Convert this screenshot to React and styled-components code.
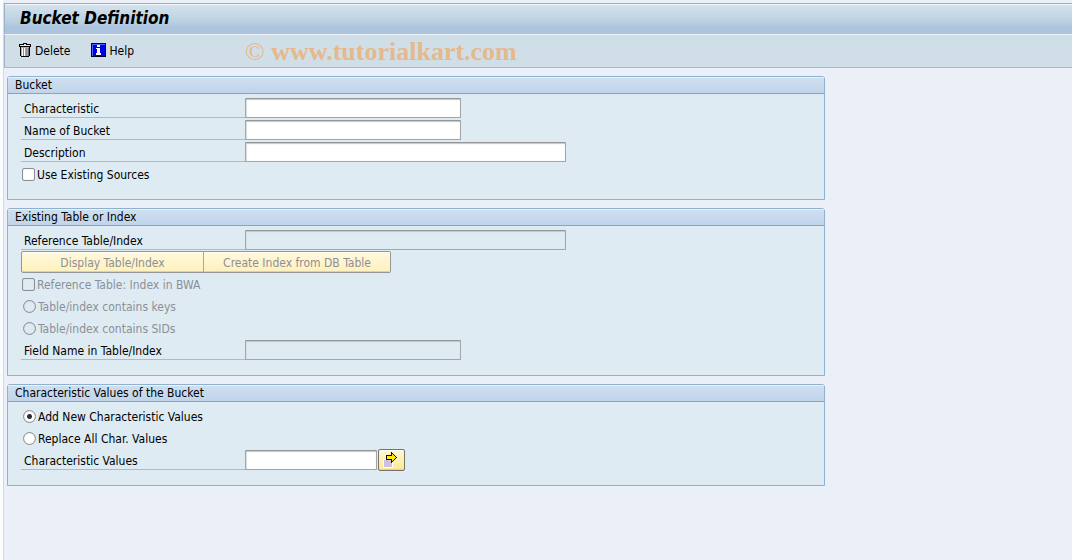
import React from "react";
import styled, { createGlobalStyle, css } from "styled-components";

const GlobalStyle = createGlobalStyle`
  * { box-sizing: border-box; }
  body {
    margin: 0;
    background: #ebeff8;
    color: #000;
    font: 12px/16px "DejaVu Sans Condensed", "Noto Sans", sans-serif;
  }
  button, input { font: inherit; color: inherit; margin: 0; }
`;

const Page = styled.div`
  min-height: 100vh;
  padding-top: 3px;
  border-left: 3px solid #fbfcfe;
  background: #ebeff8;
`;

const Frame = styled.div`
  min-height: calc(100vh - 3px);
  border-left: 1px solid #d3d9e6;
`;

const TitleBar = styled.header`
  height: 32px;
  padding: 0 15px 2px;
  display: flex;
  align-items: center;
  border-top: 1px solid #9fa9bd;
  border-left: 1px solid #9fb3c8;
  border-bottom: 1px solid #eef3f9;
  background: linear-gradient(#d5e3ef, #bad0e0 60%, #adc5de 75%, #adc4de);
  box-shadow: inset 0 1px #f2f7fb;
`;

const Title = styled.h1`
  margin: 0;
  font: italic bold 17px/20px "DejaVu Sans Condensed", "Noto Sans", sans-serif;
`;

const Toolbar = styled.div`
  position: relative;
  height: 33px;
  padding: 0 14px;
  display: flex;
  align-items: center;
  gap: 21px;
  background: #d0dee8;
  border-left: 1px solid #9fb3c8;
  border-bottom: 1px solid #a6b9c9;
`;

const ToolButton = styled.button`
  display: flex;
  align-items: center;
  gap: 3px;
  padding: 0;
  border: 0;
  background: none;
  svg { display: block; margin-bottom: 2px; }
`;

const Watermark = styled.div`
  position: absolute;
  left: 240px;
  top: 3px;
  color: #e5b98b;
  font: bold 26px/28px "Liberation Serif", serif;
  white-space: nowrap;
  pointer-events: none;
  span { font-weight: normal; }
`;

const Content = styled.main`
  padding: 8px 3px;
  display: flex;
  flex-direction: column;
  gap: 8px;
`;

const Panel = styled.section`
  width: 100%;
  max-width: 818px;
  padding-bottom: 14px;
  border: 1px solid #8fb1d0;
  border-radius: 3px 3px 0 0;
  background: #deebf3;
`;

const PanelTitle = styled.h2`
  margin: 0 0 3px;
  height: 17px;
  padding: 0 7px;
  border-bottom: 1px solid #86a3c6;
  border-radius: 2px 2px 0 0;
  background: linear-gradient(#cfdfee, #c0d5eb);
  box-shadow: inset 0 1px #e9f2fa;
  font-size: 12px;
  line-height: 16px;
  font-weight: normal;
`;

const Row = styled.div`
  height: 22px;
  padding-left: 13px;
  display: flex;
  align-items: center;
`;

const FieldLabel = styled.label`
  width: 224px;
  height: 20px;
  padding-left: 3px;
  line-height: 22px;
  border-bottom: 1px solid #b3b9be;
`;

const TextInput = styled.input`
  width: ${(p) => p.$width}px;
  height: 20px;
  padding: 0 3px;
  border: 1px solid #a3a5a8;
  border-top-color: #939598;
  border-radius: 1px;
  background: #fff;
  box-shadow: inset 0 1px 1px #c4c7ca, inset 1px 0 1px #dcdfe1;
  outline: none;
  &:disabled { background: #deebf3; }
`;

const ChoiceLabel = styled.label`
  display: flex;
  align-items: center;
  gap: 2px;
  line-height: 18px;
  padding-left: ${(p) => (p.$radio ? 2 : 1)}px;
  color: ${(p) => (p.$disabled ? "#8b9096" : "#000")};
  span { padding-top: 2px; }
`;

const choice = css`
  appearance: none;
  width: 13px;
  height: 13px;
  border: 1px solid #8c8f93;
  background: #fff;
  box-shadow: inset 0 0 1px #a9adb1;
  &:disabled { background: #deebf3; }
`;

const CheckBox = styled.input.attrs({ type: "checkbox" })`
  ${choice}
  border-radius: 2px;
`;

const Radio = styled.input.attrs({ type: "radio" })`
  ${choice}
  border-radius: 50%;
  &:checked { background: radial-gradient(circle, #2b2d3a 2px, #fff 3px); }
`;

const ActionButton = styled.button`
  width: ${(p) => p.$width}px;
  height: 22px;
  padding: 1px 0 0;
  border: 1px solid #95969a;
  border-radius: ${(p) => p.$corners || "2px"};
  background: linear-gradient(#fff8dd, #fff1bd);
  box-shadow: inset 0 1px #fffdf0, inset 0 -1px #e5d28e;
  &:disabled { color: #8b9096; }
  & + & { border-left-color: #b3a878; margin-left: -1px; }
`;

const IconButton = styled(ActionButton)`
  margin-left: 1px;
  padding: 0 2px 0 0;
  display: flex;
  align-items: center;
  justify-content: center;
  border-color: #77736b;
  background: linear-gradient(#fff7d4, #ffe993);
`;

const TrashIcon = () => (
  <svg width="13" height="15" viewBox="0 0 13 15" shapeRendering="crispEdges" aria-hidden="true">
    <path d="M4 0h4v1h4v3H0V1h4z" fill="#000" />
    <path d="M5 1h2v1H5zM1 2h10v1H1z" fill="#e4e6ec" />
    <path d="M1 4h10v9h-1v1H2v-1H1z" fill="#000" />
    <path d="M2 4h8v9H2z" fill="#aaa9b6" />
    <path d="M3 5h1v8H3zM5 5h1v8H5z" fill="#fff" />
    <path d="M4 5h1v8H4zM7 5h1v8H7z" fill="#8c8b9d" />
    <path d="M9 5h1v8H9z" fill="#66667a" />
  </svg>
);

const InfoIcon = () => (
  <svg width="15" height="14" viewBox="0 0 15 14" shapeRendering="crispEdges" aria-hidden="true">
    <path d="M0 0h15v14H0z" fill="#00002a" />
    <path d="M1 1h13v12H1z" fill="#0000e6" />
    <path d="M1 1h13v1H2v11H1z" fill="#4b63ff" />
    <path d="M6 2h3v2H6zM5 5h4v5h1v2H5v-2h1V6H5z" fill="#fff" />
  </svg>
);

const MultiSelectIcon = () => (
  <svg width="15" height="16" viewBox="0 0 15 16" shapeRendering="crispEdges" aria-hidden="true">
    <path d="M0 7h10v9H0z" fill="#fff" />
    <path d="M1 8h8v7H1z" fill="#d2bfe0" />
    <path d="M3 3h5V0h1v1h1v1h1v1h1v1h1v1h1v1h-1v1h-1v1h-1v1h-1v1H9v1H8V8H3z" fill="#111" />
    <path d="M4 4h5V2h1v1h1v1h1v1h1v1h-1v1h-1v1h-1v1H9V7H4z" fill="#ffe800" />
  </svg>
);

function Field({ id, label, width, disabled, children }) {
  return (
    <Row>
      <FieldLabel htmlFor={id}>{label}</FieldLabel>
      <TextInput id={id} type="text" $width={width} disabled={disabled} />
      {children}
    </Row>
  );
}

function Choice({ radio, label, disabled, ...rest }) {
  const Control = radio ? Radio : CheckBox;
  return (
    <Row>
      <ChoiceLabel $radio={radio} $disabled={disabled}>
        <Control disabled={disabled} {...rest} />
        <span>{label}</span>
      </ChoiceLabel>
    </Row>
  );
}

export default function App() {
  return (
    <Page>
      <GlobalStyle />
      <Frame>
        <TitleBar>
          <Title>Bucket Definition</Title>
        </TitleBar>
        <Toolbar>
          <ToolButton type="button"><TrashIcon />Delete</ToolButton>
          <ToolButton type="button"><InfoIcon />Help</ToolButton>
          <Watermark><span>©</span> www.tutorialkart.com</Watermark>
        </Toolbar>
        <Content>
          <Panel>
            <PanelTitle>Bucket</PanelTitle>
            <Field id="characteristic" label="Characteristic" width={216} />
            <Field id="bucket-name" label="Name of Bucket" width={216} />
            <Field id="description" label="Description" width={321} />
            <Choice label="Use Existing Sources" />
          </Panel>
          <Panel>
            <PanelTitle>Existing Table or Index</PanelTitle>
            <Field id="reference-table" label="Reference Table/Index" width={321} disabled />
            <Row>
              <ActionButton type="button" disabled $width={183} $corners="2px 0 0 2px">Display Table/Index</ActionButton>
              <ActionButton type="button" disabled $width={188} $corners="0 2px 2px 0">Create Index from DB Table</ActionButton>
            </Row>
            <Choice label="Reference Table: Index in BWA" disabled />
            <Choice radio name="contents" label="Table/index contains keys" disabled />
            <Choice radio name="contents" label="Table/index contains SIDs" disabled />
            <Field id="field-name" label="Field Name in Table/Index" width={216} disabled />
          </Panel>
          <Panel>
            <PanelTitle>Characteristic Values of the Bucket</PanelTitle>
            <Choice radio name="mode" label="Add New Characteristic Values" defaultChecked />
            <Choice radio name="mode" label="Replace All Char. Values" />
            <Field id="values" label="Characteristic Values" width={132}>
              <IconButton type="button" $width={27} aria-label="Multiple selection">
                <MultiSelectIcon />
              </IconButton>
            </Field>
          </Panel>
        </Content>
      </Frame>
    </Page>
  );
}
